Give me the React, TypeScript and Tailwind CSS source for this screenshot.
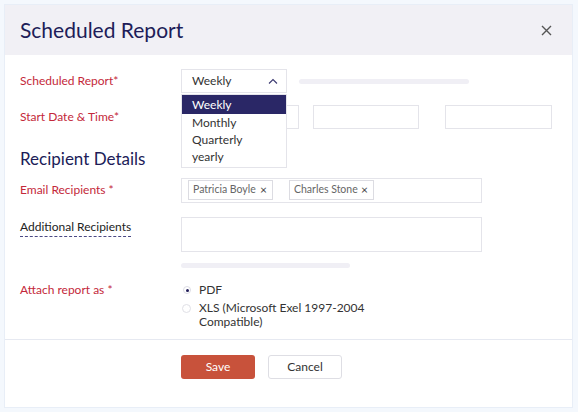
import React from "react";

const F = { fontFamily: "Lato, 'Open Sans', sans-serif" };

export default function App() {
  return (
    <div className="w-[578px] h-[412px] bg-[#f4f8fd] p-[4px] pr-[5px]" style={F}>
      <div className="w-full h-full bg-white border border-[#e8eef7] flex flex-col">
        {/* header */}
        <div className="h-[50px] bg-[#f1f0f5] flex items-center justify-between pl-[15px] pr-[20px]">
          <div className="text-[21px] text-[#201c58] tracking-[0px]">Scheduled Report</div>
          <svg width="11" height="11" viewBox="0 0 11 11">
            <path d="M1 1L10 10M10 1L1 10" stroke="#555" strokeWidth="1.4" />
          </svg>
        </div>
        {/* body */}
        <div className="pl-[15px] pt-[14px] pb-[10px] border-b border-[#e6e9f1] text-[12px]">
          {/* row 1 */}
          <div className="flex items-center h-[24px]">
            <div className="w-[161px] text-[#c4283a]">Scheduled Report*</div>
            <div className="relative">
              <div className="w-[106px] h-[24px] border border-[#e4e4ea] flex items-center justify-between pl-[10px] pr-[8px] text-[#333]">
                <span>Weekly</span>
                <svg width="10" height="6" viewBox="0 0 10 6">
                  <path d="M1 5.5L5 1.5L9 5.5" fill="none" stroke="#3a3870" strokeWidth="1.1" />
                </svg>
              </div>
              <div className="absolute left-0 top-[25px] z-10 w-[106px] h-[74px] bg-white border border-[#e4e4ea] text-[#333] flex flex-col">
                <div className="h-[19px] bg-[#2a2766] text-white pl-[10px] flex items-center">Weekly</div>
                <div className="h-[17px] pl-[10px] flex items-center">Monthly</div>
                <div className="h-[17px] pl-[10px] flex items-center">Quarterly</div>
                <div className="h-[18px] pl-[10px] flex items-center">yearly</div>
              </div>
            </div>
            <div className="ml-[12px] w-[170px] h-[5px] rounded-full bg-[#f0eff5]" />
          </div>
          {/* row 2 */}
          <div className="flex items-center h-[24px] mt-[12px]">
            <div className="w-[161px] text-[#c4283a]">Start Date &amp; Time*</div>
            <div className="w-[118px] h-[24px] border border-[#e4e4ea]" />
            <div className="ml-[14px] w-[106px] h-[24px] border border-[#e4e4ea]" />
            <div className="ml-[26px] w-[107px] h-[24px] border border-[#e4e4ea]" />
          </div>
          {/* heading */}
          <div className="mt-[19px] h-[22px] leading-[22px] text-[17px] text-[#201c58]">Recipient Details</div>
          {/* email */}
          <div className="flex items-center mt-[8px] h-[24px]">
            <div className="w-[161px] text-[#c4283a]">Email Recipients *</div>
            <div className="w-[301px] h-[25px] border border-[#e4e4ea] flex items-center pl-[6px] gap-[16px] text-[10.5px] text-[#666]">
              <div className="h-[20px] w-[85px] border border-[#dcdce2] flex items-center justify-between pl-[4px] pr-[5px]">
                <span>Patricia Boyle</span>
                <span className="text-[#444] text-[12px]">×</span>
              </div>
              <div className="h-[20px] w-[85px] border border-[#dcdce2] flex items-center justify-between pl-[4px] pr-[5px]">
                <span>Charles Stone</span>
                <span className="text-[#444] text-[12px]">×</span>
              </div>
            </div>
          </div>
          {/* additional */}
          <div className="flex mt-[15px]">
            <div className="w-[161px] pt-[1px]">
              <span className="text-[#222] border-b border-dashed border-[#4a4884] pb-[2px]">Additional Recipients</span>
            </div>
            <div className="w-[301px] h-[35px] border border-[#e4e4ea]" />
          </div>
          <div className="ml-[161px] mt-[11px] w-[169px] h-[5px] rounded-full bg-[#f0eff5]" />
          {/* attach */}
          <div className="flex mt-[14px]">
            <div className="w-[161px] text-[#c4283a] leading-[16px]">Attach report as *</div>
            <div className="flex flex-col gap-[3px] text-[#333]">
              <div className="flex items-center h-[16px]">
                <span className="w-[8px] h-[8px] rounded-full border border-[#dcdce4] flex items-center justify-center ml-[2px] mr-[8px]">
                  <span className="w-[3px] h-[3px] rounded-full bg-[#201c58]" />
                </span>
                PDF
              </div>
              <div className="flex items-start leading-[14px]">
                <span className="w-[9px] h-[9px] rounded-full border border-[#e0e0e6] ml-[1px] mr-[8px] mt-[3px] shrink-0" />
                <span className="w-[170px]">XLS (Microsoft Exel 1997-2004 Compatible)</span>
              </div>
            </div>
          </div>
        </div>
        {/* footer */}
        <div className="flex pl-[176px] pt-[15px] gap-[13px] text-[12px]">
          <button className="w-[74px] h-[24px] rounded-[3px] bg-[#c8523b] text-white">Save</button>
          <button className="w-[74px] h-[24px] rounded-[3px] border border-[#dedee4] text-[#333] bg-white">Cancel</button>
        </div>
      </div>
    </div>
  );
}
